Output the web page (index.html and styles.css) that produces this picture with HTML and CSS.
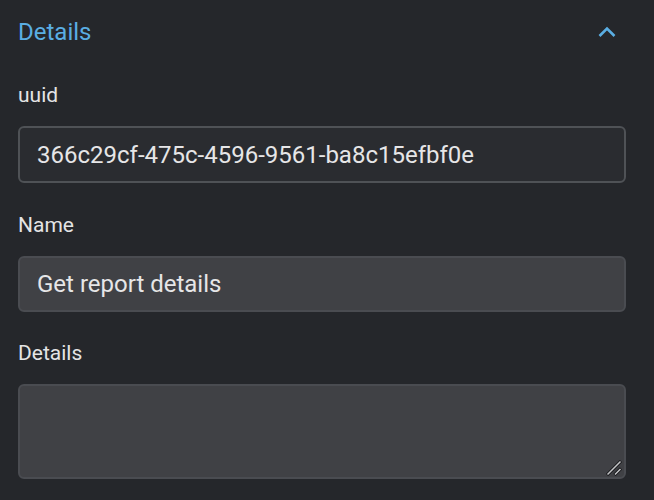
FILE: index.html
```html
<!DOCTYPE html>
<html>
<head>
<meta charset="utf-8">
<link rel="stylesheet" href="styles.css">
</head>
<body>
<div class="panel">
  <div class="header">
    <span class="title">Details</span>
    <svg class="chevron" width="20" height="12" viewBox="0 0 20 12"><path d="M2.5 10 L10 2.5 L17.5 10" fill="none" stroke="#5aaee3" stroke-width="2.6"/></svg>
  </div>
  <div class="field">
    <label class="label">uuid</label>
    <div class="input readonly">366c29cf-475c-4596-9561-ba8c15efbf0e</div>
  </div>
  <div class="field">
    <label class="label">Name</label>
    <div class="input short">Get report details</div>
  </div>
  <div class="field">
    <label class="label tight">Details</label>
    <div class="input area">
      <svg class="grip" width="16" height="16" viewBox="0 0 16 16"><path d="M1 15 L15 1 M8.5 15 L15 8.5" stroke="#18191c" stroke-width="3.2"/><path d="M1.5 14.5 L14.5 1.5 M9 14.5 L14.5 9" stroke="#c4c5c7" stroke-width="1.5"/></svg>
    </div>
  </div>
</div>
</body>
</html>
```

FILE: styles.css
```css
html, body {
  margin: 0;
  padding: 0;
  background: #25272b;
  width: 654px;
  height: 500px;
  overflow: hidden;
}
.panel {
  padding: 0 28px 0 18px;
  font-family: Roboto, "Liberation Sans", sans-serif;
}
.header {
  display: flex;
  align-items: center;
  justify-content: space-between;
  height: 43px;
  padding-top: 10px;
}
.title {
  color: #5aaee3;
  font-size: 24px;
  line-height: 28px;
}
.chevron {
  margin-right: 9px;
  margin-top: 0;
}
.field {
  display: flex;
  flex-direction: column;
}
.label {
  color: #e4e4e5;
  font-size: 21px;
  line-height: 24px;
  margin-top: 30px;
  margin-bottom: 19px;
}
.label.tight {
  margin-top: 29px;
}
.input {
  box-sizing: border-box;
  height: 57px;
  border: 2px solid #4a4c51;
  border-radius: 6px;
  background: #404145;
  color: #e6e6e7;
  font-size: 24px;
  padding: 0 17px;
  display: flex;
  align-items: center;
}
.input.short {
  height: 56px;
}
.input.readonly {
  background: #2a2c30;
  border-color: #4f5256;
}
.area {
  height: 95px;
  position: relative;
}
.grip {
  position: absolute;
  right: 2px;
  bottom: 1px;
}
```
